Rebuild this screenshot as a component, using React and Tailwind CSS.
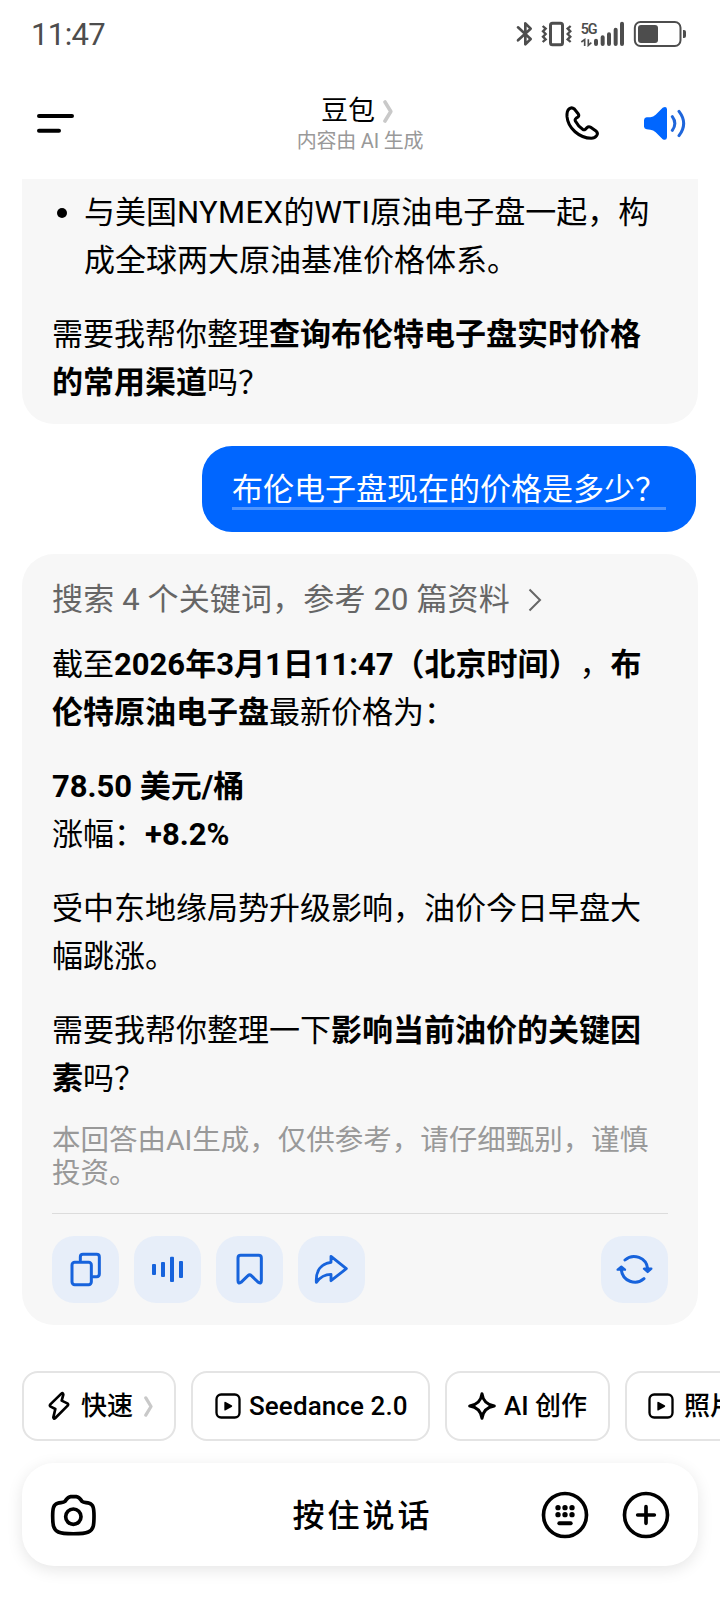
import React from 'react';

const actions = [
  { id: 'copy', Icon: CopyIcon },
  { id: 'read', Icon: VoiceIcon },
  { id: 'save', Icon: BookmarkIcon },
  { id: 'share', Icon: ShareIcon },
];

const App = () => {
  return (
    <div className="w-[720px] h-[1612px] overflow-hidden bg-white flex flex-col text-black font-[Roboto,'Noto_Sans_CJK_SC',sans-serif] [text-spacing-trim:space-all]">
      <StatusBar />
      <Header />

      <main className="px-[22px] flex flex-col gap-[22px] text-[31px] leading-[48px] whitespace-nowrap">
        <section className="bg-[#f7f7f7] rounded-b-[32px] px-[30px] pt-[10px] pb-[17px] flex flex-col gap-[26px]">
          <div className="flex">
            <span className="w-[10px] h-[10px] rounded-full bg-black mt-[19px] ml-[5px] mr-[17px] shrink-0" />
            <p>
              与美国<span className="tracking-[0.4px]">NYMEX</span>的<span className="tracking-[0.4px]">WTI</span>原油电子盘一起，构<br />
              成全球两大原油基准价格体系。
            </p>
          </div>
          <p>
            需要我帮你整理<b className="font-bold">查询布伦特电子盘实时价格</b><br />
            <b className="font-bold">的常用渠道</b>吗？
          </p>
        </section>

        <div className="self-end mr-[2px] h-[86px] px-[30px] pt-[20px] rounded-[30px] bg-[#0066ff] text-white">
          <p className="h-[44px] border-b-[3px] border-[#4d94ff]">布伦电子盘现在的价格是多少？</p>
        </div>

        <section className="bg-[#f7f7f7] rounded-[32px] px-[30px] pt-[22px] pb-[22px] h-[771px] flex flex-col">
          <div className="flex items-center text-[#666666]">
            <span className="tracking-[0.15px]">搜索 4 个关键词，参考 20 篇资料</span>
            <svg className="w-[14px] h-[24px] ml-[18px]" viewBox="0 0 14 24" fill="none" stroke="currentColor" strokeWidth="2">
              <path d="M1.5 1.5 12 12 1.5 22.5" />
            </svg>
          </div>

          <div className="mt-[17px] flex flex-col gap-[26px]">
            <p>
              截至<b className="font-bold">2026年3月1日11:47（北京时间）</b>，<b className="font-bold">布</b><br />
              <b className="font-bold">伦特原油电子盘</b>最新价格为：
            </p>
            <p>
              <b className="font-bold">78.50 美元/桶</b><br />
              涨幅：<b className="font-bold">+8.2%</b>
            </p>
            <p>
              受中东地缘局势升级影响，油价今日早盘大<br />
              幅跳涨。
            </p>
            <p>
              需要我帮你整理一下<b className="font-bold">影响当前油价的关键因</b><br />
              <b className="font-bold">素</b>吗？
            </p>
          </div>

          <p className="mt-[21px] text-[28.5px] leading-[33px] text-[#999999]">
            本回答由AI生成，仅供参考，请仔细甄别，谨慎<br />
            投资。
          </p>

          <div className="mt-auto border-t border-[#dcdcdc] pt-[22px] flex justify-between">
            <div className="flex gap-[15px]">
              {actions.map(({ id, Icon }) => (
                <ActionButton key={id}><Icon /></ActionButton>
              ))}
            </div>
            <ActionButton><RefreshIcon /></ActionButton>
          </div>
        </section>
      </main>

      <div className="mt-[46px] ml-[22px] flex gap-[15px] text-[26px] font-medium whitespace-nowrap">
        <Chip className="w-[154px] pl-[23px]">
          <BoltIcon />
          <span className="ml-[10px]">快速</span>
          <Chevron className="w-[9px] h-[21px] ml-[11px]" />
        </Chip>
        <Chip className="w-[239px] pl-[21px]">
          <PlayIcon />
          <span className="ml-[7px] tracking-[0.1px]">Seedance 2.0</span>
        </Chip>
        <Chip className="w-[165px] pl-[20px]">
          <SparkIcon />
          <span className="ml-[7px]">AI 创作</span>
        </Chip>
        <Chip className="w-[220px] pl-[20px]">
          <PlayIcon />
          <span className="ml-[9px]">照片动起来</span>
        </Chip>
      </div>

      <div className="mt-[22px] mx-[22px] h-[103px] shrink-0 rounded-[32px] bg-white shadow-[0_4px_16px_rgba(0,0,0,0.1)] grid grid-cols-[1fr_auto_1fr] items-center pl-[28px] pr-[28px]">
        <CameraIcon />
        <span className="text-[32px] tracking-[3px] font-medium pt-[2px] pl-[5px]">按住说话</span>
        <div className="flex justify-end gap-[33px]">
          <KeyboardIcon />
          <PlusIcon />
        </div>
      </div>
    </div>
  );
};

const StatusBar = () => (
  <div className="h-[66px] shrink-0 pt-[21px] pl-[31px] pr-[33px] flex justify-between text-[#4d4d4d]">
    <span className="text-[31px] leading-[27px] tracking-[-0.6px]">11:47</span>
    <div className="flex gap-2">
      <svg className="w-[17px] h-[26px]" viewBox="468 63 51 78" fill="none" stroke="currentColor" strokeWidth="8" strokeLinejoin="round" strokeLinecap="round">
        <path d="M474 82 512 117 496 133V70L512 86 474 121" />
      </svg>
      <svg className="w-[31px] h-[26px]" viewBox="543 63 93 78" fill="none" stroke="currentColor">
        <rect x="571.5" y="69.5" width="36" height="65" rx="6" strokeWidth="9" />
        <path strokeWidth="7" d="M548 78 557 86 549 94 557 102 549 110 557 118 548 126M632 78 623 86 631 94 623 102 631 110 623 118 632 126" />
      </svg>
      <svg className="w-[45px] h-[26px]" viewBox="660 63 135 78" fill="currentColor">
        <text x="662" y="101" fontSize="43" fontWeight="600" letterSpacing="-3">5G</text>
        <g fill="none" stroke="currentColor" strokeWidth="5">
          <path d="M664 126 674 119V138M685 118V136L694 128" />
        </g>
        <g fill="none" stroke="currentColor" strokeWidth="12" strokeLinecap="round">
          <path d="M708 122V132M728 112V132M747 103V132M767 89V132M786 71V132" />
        </g>
      </svg>
      <svg className="w-[54px] h-[26px]" viewBox="819 63 162 78" fill="currentColor">
        <rect x="824.5" y="66" width="137" height="72" rx="17" fill="none" stroke="currentColor" strokeWidth="6" />
        <rect x="834" y="75" width="60" height="54" rx="9" />
        <path d="M969 90h3q6 0 6 6v12q0 6-6 6h-3z" />
      </svg>
    </div>
  </div>
);

const Header = () => (
  <header className="h-[113px] shrink-0 px-[33px] grid grid-cols-[1fr_auto_1fr] items-start">
    <svg className="w-[38px] h-[20px] mt-[47px] ml-[4px]" viewBox="0 0 38 20" stroke="black" strokeWidth="4" strokeLinecap="round">
      <path d="M2 3H35M2 17.7H22" />
    </svg>
    <div className="flex flex-col items-center pt-[27px]">
      <div className="flex items-center mr-[6px]">
        <span className="text-[27px] leading-[36px]">豆包</span>
        <Chevron className="w-[10px] h-[23px] ml-[8px]" />
      </div>
      <span className="text-[20px] leading-[24px] tracking-[-0.2px] text-[#999999]">内容由 AI 生成</span>
    </div>
    <div className="flex justify-end gap-[41px] mt-[38px]">
      <svg className="w-[38px] h-[38px]" viewBox="612 312 114 114" fill="none" stroke="black" strokeWidth="9" strokeLinejoin="round">
        <path d="M630 327Q623 333 624 350C627 385 661 414 697 415Q707 415 713 407 718 400 712 394L695 382Q689 378 684 383L679 388Q675 391 671 388 657 378 649 363 647 358 651 355L657 351Q661 347 658 342L646 327Q638 320 630 327Z" />
      </svg>
      <svg className="w-[45px] h-[38px]" viewBox="846 312 135 114" fill="#0066ff">
        <path d="M860 352H871Q880 351 887 344L908 323Q920 317 921 328V412Q920 423 908 418L887 397Q880 390 871 389L860 388Q853 386 852 380V360Q853 353 860 352Z" />
        <path fill="none" stroke="#1f66db" strokeWidth="9" strokeLinecap="round" d="M937 350Q952 370 937 391M957 334Q985 370 957 407" />
      </svg>
    </div>
  </header>
);

const ActionButton = ({ children }) => (
  <button className="w-[67px] h-[67px] rounded-[22px] bg-[#e7eef9] text-[#1763dc]">{children}</button>
);

const Chip = ({ className, children }) => (
  <button className={`h-[70px] shrink-0 flex items-center rounded-[16px] border-2 border-[#e4e4e4] ${className}`}>
    {children}
  </button>
);

const Chevron = ({ className }) => (
  <svg className={className} viewBox="0 0 10 23" fill="none" stroke="#c9c9c9" strokeWidth="3.6" strokeLinecap="round" strokeLinejoin="round">
    <path d="M2 2 7.8 11.5 2 21" />
  </svg>
);

function CopyIcon() {
  return (
    <svg className="w-[67px] h-[67px]" viewBox="156 48 201 201" fill="none" stroke="currentColor" strokeWidth="9" strokeLinecap="round">
      <rect x="216" y="127" width="58" height="67" rx="8" />
      <path d="M241 121V111Q241 103 249 103H290Q298 103 298 111V162Q298 170 290 170H279" />
    </svg>
  );
}

function VoiceIcon() {
  return (
    <svg className="w-[67px] h-[67px]" viewBox="402 48 201 201" fill="currentColor">
      <rect x="456" y="132" width="12" height="33" rx="3" />
      <rect x="483" y="126" width="12" height="45" rx="3" />
      <rect x="510" y="110" width="12" height="76" rx="3" />
      <rect x="537" y="123" width="12" height="51" rx="3" />
    </svg>
  );
}

function BookmarkIcon() {
  return (
    <svg className="w-[67px] h-[67px]" viewBox="648 48 201 201" fill="none" stroke="currentColor" strokeWidth="9" strokeLinejoin="round">
      <path d="M714 114Q714 106 722 106H776Q784 106 784 114V182Q784 193 775 187L754 167Q749 162 744 167L723 187Q714 193 714 182Z" />
    </svg>
  );
}

function ShareIcon() {
  return (
    <svg className="w-[67px] h-[67px]" viewBox="894 48 201 201" fill="none" stroke="currentColor" strokeWidth="8.5" strokeLinejoin="round">
      <path d="M993 109 1039 146 993 182V163C974 163 962 169 949 187 947 153 962 131 993 127Z" />
    </svg>
  );
}

function RefreshIcon() {
  return (
    <svg className="w-[67px] h-[67px]" viewBox="123 168 201 201" fill="none" stroke="currentColor" strokeWidth="9" strokeLinecap="round" strokeLinejoin="round">
      <path d="M195 240A41 41 0 0 1 263 266M184 270A41 41 0 0 0 252 296" />
      <path fill="currentColor" strokeWidth="7" d="M252 266H274L263 276ZM173 269H195L184 260Z" />
    </svg>
  );
}

const BoltIcon = () => (
  <svg className="w-[24px] h-[32px]" viewBox="142 120 72 96" fill="none" stroke="black" strokeWidth="8" strokeLinejoin="round">
    <path d="M185 131 152 163Q149 167 153 170L167 177 161 202Q162 209 167 204L204 167Q207 163 203 160L186 152 191 134Q190 127 185 131Z" />
  </svg>
);

const PlayIcon = () => (
  <svg className="w-[28px] h-[28px]" viewBox="642 126 84 84" fill="none" stroke="black" strokeWidth="7">
    <rect x="649.5" y="133.5" width="69" height="69" rx="14" />
    <path fill="black" stroke="none" d="M673 158Q673 154 677 156L695 166Q699 168 695 171L677 181Q673 183 673 179Z" />
  </svg>
);

const SparkIcon = () => (
  <svg className="w-[30px] h-[30px]" viewBox="321 123 90 90" fill="none" stroke="black" strokeWidth="9" strokeLinejoin="round">
    <path d="M366 131Q370 163 403 168 370 173 366 205 362 173 329 168 362 163 366 131Z" />
  </svg>
);

const CameraIcon = () => (
  <svg className="w-[47px] h-[44px]" viewBox="150 126 141 132" fill="none" stroke="black" strokeWidth="11">
    <path d="M212 137H229C239 138 241 145 246 151 252 156 258 154 268 157 280 161 282 172 282 195 282 222 281 236 265 243 250 250 190 250 175 243 160 236 158 222 158 195 158 172 160 161 173 157 183 154 189 156 195 151 200 145 202 138 212 137Z" />
    <circle cx="220" cy="197" r="23" />
  </svg>
);

const KeyboardIcon = () => (
  <svg className="w-[48px] h-[48px]" viewBox="425 121 144 144" fill="black">
    <circle cx="497" cy="193" r="64.5" fill="none" stroke="black" strokeWidth="11" />
    {[476, 497, 518].map((x) => (
      <g key={x}>
        <circle cx={x} cy="171" r="8" />
        <circle cx={x} cy="192" r="8" />
      </g>
    ))}
    <path d="M480 218H514" stroke="black" strokeWidth="12" strokeLinecap="round" />
  </svg>
);

const PlusIcon = () => (
  <svg className="w-[48px] h-[48px]" viewBox="667 121 144 144" fill="none" stroke="black" strokeWidth="11" strokeLinecap="round">
    <circle cx="739" cy="193" r="64.5" />
    <path d="M714 193H764M739 168V218" />
  </svg>
);

export default App;
